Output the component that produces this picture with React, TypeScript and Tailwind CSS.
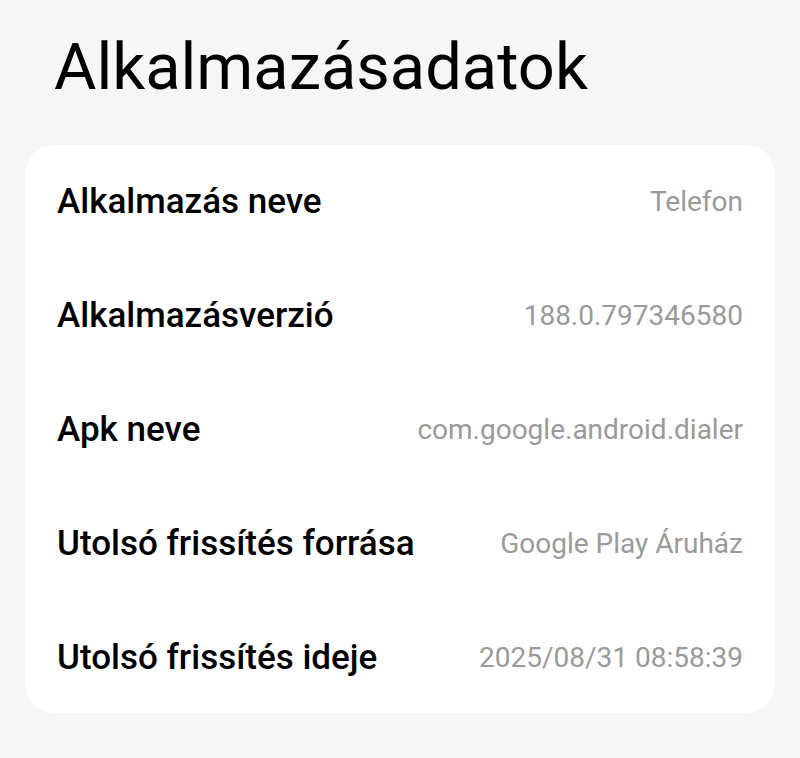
export default function App() {
    const rows = [
        { label: "Alkalmazás neve", value: "Telefon" },
        { label: "Alkalmazásverzió", value: "188.0.797346580" },
        { label: "Apk neve", value: "com.google.android.dialer" },
        { label: "Utolsó frissítés forrása", value: "Google Play Áruház" },
        { label: "Utolsó frissítés ideje", value: "2025/08/31 08:58:39" },
    ];

    return (
        <div className="w-[800px] h-[758px] bg-[#f6f6f6] font-['Roboto',sans-serif] flex flex-col">
            <h1 className="pl-[54px] pt-[35px] h-[145px] text-[65px] leading-[65px] text-black font-normal">
                Alkalmazásadatok
            </h1>
            <div className="mx-[25px] h-[568px] bg-white rounded-[30px] flex flex-col">
                {rows.map((row) => (
                    <div key={row.label} className="h-[114px] shrink-0 px-[32px] flex items-center justify-between">
                        <span className="text-[35px] font-medium text-black">{row.label}</span>
                        <span className="text-[28px] text-[#9a9a9a]">{row.value}</span>
                    </div>
                ))}
            </div>
        </div>
    );
}
